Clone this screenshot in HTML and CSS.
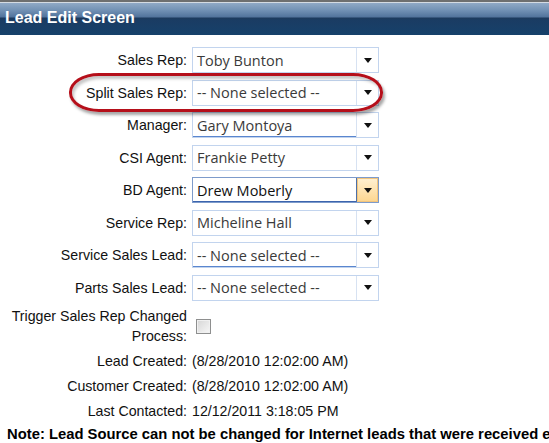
FILE: index.html
```
<!DOCTYPE html>
<html>
<head>
<meta charset="utf-8">
<link rel="stylesheet" href="styles.css">
</head>
<body>
<div class="page">
  <div class="header"><span class="title">Lead Edit Screen</span></div>
  <div class="form">
    <div class="row"><div class="label">Sales Rep:</div><div class="value"><div class="sel"><div class="sel-text">Toby Bunton</div><div class="sel-btn"><span class="tri"></span></div></div></div></div>
    <div class="row"><div class="label">Split Sales Rep:</div><div class="value"><div class="sel"><div class="sel-text">-- None selected --</div><div class="sel-btn"><span class="tri"></span></div></div></div></div>
    <div class="row"><div class="label">Manager:</div><div class="value"><div class="sel"><div class="sel-text underline">Gary Montoya</div><div class="sel-btn"><span class="tri"></span></div></div></div></div>
    <div class="row"><div class="label">CSI Agent:</div><div class="value"><div class="sel"><div class="sel-text">Frankie Petty</div><div class="sel-btn"><span class="tri"></span></div></div></div></div>
    <div class="row"><div class="label">BD Agent:</div><div class="value"><div class="sel active"><div class="sel-text underline">Drew Moberly</div><div class="sel-btn"><span class="tri"></span></div></div></div></div>
    <div class="row"><div class="label">Service Rep:</div><div class="value"><div class="sel"><div class="sel-text">Micheline Hall</div><div class="sel-btn"><span class="tri"></span></div></div></div></div>
    <div class="row"><div class="label">Service Sales Lead:</div><div class="value"><div class="sel"><div class="sel-text underline">-- None selected --</div><div class="sel-btn"><span class="tri"></span></div></div></div></div>
    <div class="row"><div class="label">Parts Sales Lead:</div><div class="value"><div class="sel"><div class="sel-text">-- None selected --</div><div class="sel-btn"><span class="tri"></span></div></div></div></div>
    <div class="row trigger"><div class="label">Trigger Sales Rep Changed<br>Process:</div><div class="value"><span class="check"></span></div></div>
    <div class="row info first"><div class="label">Lead Created:</div><div class="value">(8/28/2010 12:02:00 AM)</div></div>
    <div class="row info"><div class="label">Customer Created:</div><div class="value">(8/28/2010 12:02:00 AM)</div></div>
    <div class="row info"><div class="label">Last Contacted:</div><div class="value">12/12/2011 3:18:05 PM</div></div>
  </div>
  <div class="note">Note: Lead Source can not be changed for Internet leads that were received e</div>
  <div class="oval"></div>
</div>
</body>
</html>
```
FILE: styles.css
```
html, body {
  margin: 0;
  padding: 0;
  background: #fff;
}
.page {
  position: relative;
  width: 549px;
  height: 443px;
  overflow: hidden;
  font-family: "Liberation Sans", Arial, sans-serif;
  font-size: 14.2px;
  color: #111;
}
.header {
  height: 35px;
  box-sizing: border-box;
  border-top: 2px solid #6e6f70;
  background: linear-gradient(to bottom, #d4dbe3 0px, #d4dbe3 1px, #90a9c6 1px, #7392b5 8px, #52739c 15px, #1d3a5d 16px, #1a3c63 18px, #16416b 33px);
  display: flex;
  align-items: center;
  padding-left: 5px;
}
.title {
  color: #fff;
  font-weight: bold;
  font-size: 16px;
  margin-top: -1px;
}
.form {
  display: grid;
  grid-template-columns: 187px 1fr;
  column-gap: 5px;
  padding-top: 8.75px;
}
.row {
  display: contents;
}
.label, .value {
  height: 32.5px;
  display: flex;
  align-items: center;
}
.label {
  justify-content: flex-end;
  text-align: right;
}
.sel {
  width: 187px;
  height: 26px;
  box-sizing: border-box;
  border: 1px solid #c2d4ee;
  display: flex;
  background: #fff;
}
.sel-text {
  flex: 1;
  font-family: "Open Sans", "Noto Sans", sans-serif;
  font-size: 14.5px;
  color: #3a3a3a;
  padding-left: 4px;
  display: flex;
  align-items: center;
  white-space: nowrap;
  overflow: hidden;
}
.sel-text.underline {
  box-shadow: inset 0 -1px 0 #5a86cf;
}
.sel-btn {
  width: 21px;
  border-left: 1px solid #d7e2f2;
  display: flex;
  align-items: center;
  justify-content: center;
}
.tri {
  width: 0;
  height: 0;
  border-left: 4px solid transparent;
  border-right: 4px solid transparent;
  border-top: 5px solid #111;
  margin-left: 1px;
}
.sel.active {
  border-color: #7d9bcb;
}
.sel.active .sel-text {
  color: #111;
  box-shadow: inset 0 -1px 0 #3c64ad;
}
.sel.active .sel-btn {
  border-left: 1px solid #4d70a8;
  background: linear-gradient(to bottom, #fff1d3, #fdd68f);
  box-shadow: inset 0 0 0 1px #f2c57e;
}
.trigger .label, .trigger .value {
  height: 40px;
  margin-top: 2.25px;
  line-height: 20px;
}
.check {
  width: 15px;
  height: 15px;
  box-sizing: border-box;
  border: 1px solid #8e8f8f;
  background: linear-gradient(135deg, #d6d6d6, #f7f7f7);
  box-shadow: inset 0 0 0 1px #f0f0f0;
  margin-left: 4px;
}
.info .label, .info .value {
  height: 25px;
}
.info.first .label, .info.first .value {
  margin-top: 2.5px;
}
.info .value {
  color: #111;
}
.note {
  padding-left: 7px;
  height: 20px;
  line-height: 20px;
  font-size: 14.8px;
  font-weight: bold;
  white-space: nowrap;
  color: #000;
}
.oval {
  position: absolute;
  left: 69px;
  top: 73px;
  width: 314px;
  height: 39px;
  box-sizing: border-box;
  border: 3px solid #b50f1a;
  border-radius: 30px / 19px;
  box-shadow: 2px 3px 3px rgba(0,0,0,0.35), inset 2px 3px 3px rgba(0,0,0,0.22);
  pointer-events: none;
}
```
